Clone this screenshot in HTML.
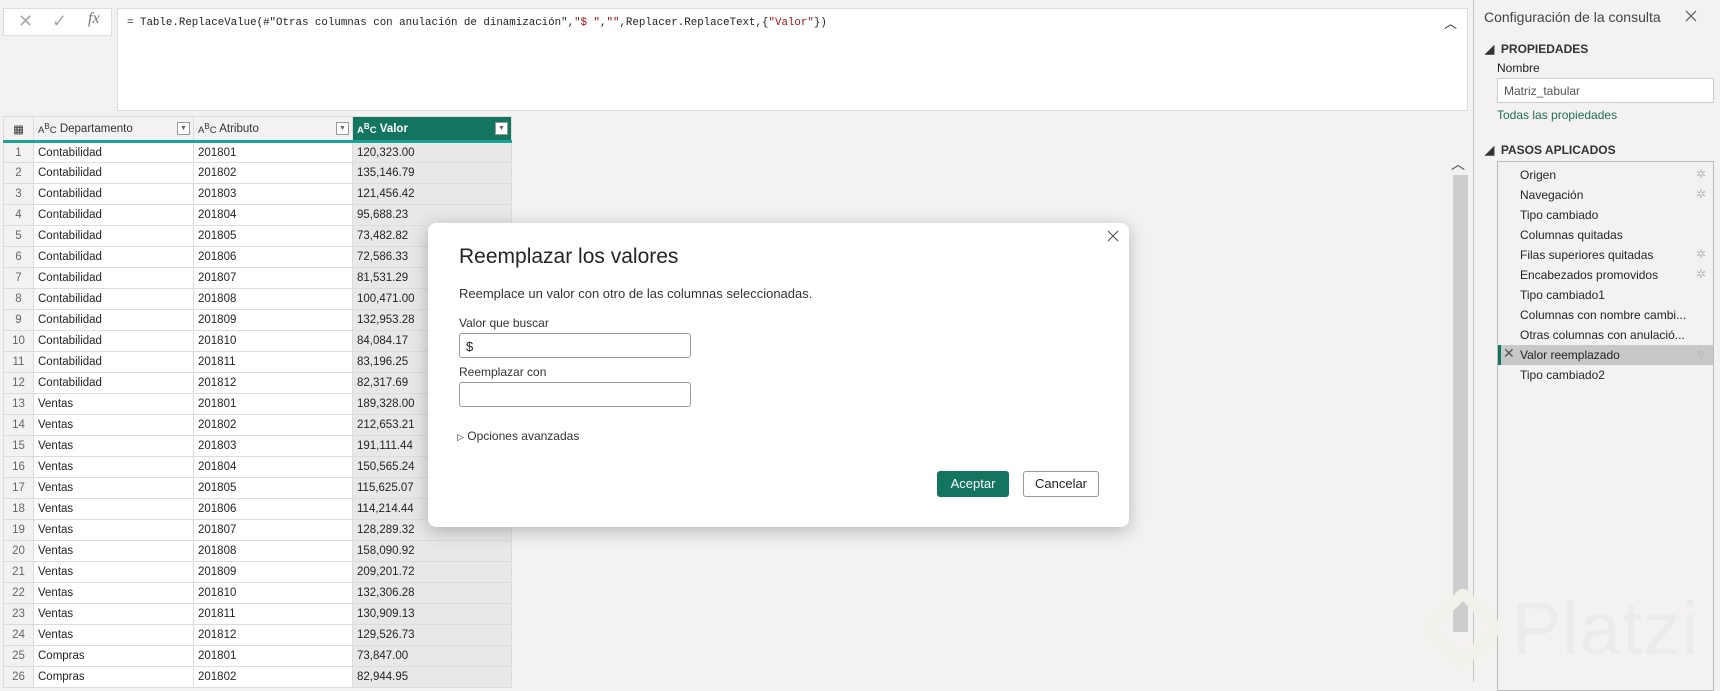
<!DOCTYPE html>
<html><head><meta charset="utf-8"><style>
*{box-sizing:border-box;margin:0;padding:0}
body{width:1720px;height:682px;background:#f3f2f1;position:relative;overflow:hidden;font-family:"Liberation Sans",sans-serif;color:#252423}
.abs{position:absolute}
table{border-collapse:collapse;position:absolute;left:3px;top:116px;font-size:11.5px}
td{height:21px;border:1px solid #dcdcdc;padding-left:4px;white-space:nowrap;background:#fff;position:relative}
td.n{width:30px;background:#f3f2f1;color:#666;text-align:center;padding:0}
td.a{width:160px}td.b{width:159px}td.c{width:159px;background:#e8e8e8}
.hd td{height:25px;background:#f3f2f1;border-bottom:3px solid #1ba397;font-size:11.5px;color:#333}
.hd td.c{background:#137560;color:#fff;font-weight:bold}
.dd{position:absolute;right:3px;top:5px;width:13px;height:13px;border:1px solid #999;background:#fff;font-size:7px;color:#666;text-align:center;line-height:12px;font-weight:normal}
.step{position:absolute;left:1520px;font-size:12px;color:#252423}
.gear{position:absolute;left:1696px;color:#bbb;font-size:12px}
</style></head><body>
<div class="abs" style="left:3px;top:8px;width:109px;height:28px;background:#fff;border:1px solid #ddd;color:#aaa;font-size:18px">
<span class="abs" style="left:14px;top:2px">✕</span><span class="abs" style="left:48px;top:2px">✓</span><span class="abs" style="left:84px;top:1px;font-family:'Liberation Serif',serif;font-style:italic;color:#777;font-size:16px">fx</span></div>
<div class="abs" style="left:117px;top:8px;width:1351px;height:103px;background:#fff;border:1px solid #ddd;font-family:'Liberation Mono',monospace;font-size:10.8px;padding:8px 9px;color:#222">= Table.ReplaceValue(#"Otras columnas con anulación de dinamización",<span style="color:#a31515">"$ "</span>,<span style="color:#a31515">""</span>,Replacer.ReplaceText,{<span style="color:#a31515">"Valor"</span>})<span class="abs" style="right:10px;top:4px;font-family:'Liberation Sans';font-size:13px">︿</span></div>
<table>
<tr class="hd"><td class="n">▦</td><td class="a"><small>A<sup>B</sup>C</small> Departamento<span class="dd">▼</span></td><td class="b"><small>A<sup>B</sup>C</small> Atributo<span class="dd">▼</span></td><td class="c"><small>A<sup>B</sup>C</small> Valor<span class="dd">▼</span></td></tr>
<tr><td class="n">1</td><td class="a">Contabilidad</td><td class="b">201801</td><td class="c">120,323.00</td></tr>
<tr><td class="n">2</td><td class="a">Contabilidad</td><td class="b">201802</td><td class="c">135,146.79</td></tr>
<tr><td class="n">3</td><td class="a">Contabilidad</td><td class="b">201803</td><td class="c">121,456.42</td></tr>
<tr><td class="n">4</td><td class="a">Contabilidad</td><td class="b">201804</td><td class="c">95,688.23</td></tr>
<tr><td class="n">5</td><td class="a">Contabilidad</td><td class="b">201805</td><td class="c">73,482.82</td></tr>
<tr><td class="n">6</td><td class="a">Contabilidad</td><td class="b">201806</td><td class="c">72,586.33</td></tr>
<tr><td class="n">7</td><td class="a">Contabilidad</td><td class="b">201807</td><td class="c">81,531.29</td></tr>
<tr><td class="n">8</td><td class="a">Contabilidad</td><td class="b">201808</td><td class="c">100,471.00</td></tr>
<tr><td class="n">9</td><td class="a">Contabilidad</td><td class="b">201809</td><td class="c">132,953.28</td></tr>
<tr><td class="n">10</td><td class="a">Contabilidad</td><td class="b">201810</td><td class="c">84,084.17</td></tr>
<tr><td class="n">11</td><td class="a">Contabilidad</td><td class="b">201811</td><td class="c">83,196.25</td></tr>
<tr><td class="n">12</td><td class="a">Contabilidad</td><td class="b">201812</td><td class="c">82,317.69</td></tr>
<tr><td class="n">13</td><td class="a">Ventas</td><td class="b">201801</td><td class="c">189,328.00</td></tr>
<tr><td class="n">14</td><td class="a">Ventas</td><td class="b">201802</td><td class="c">212,653.21</td></tr>
<tr><td class="n">15</td><td class="a">Ventas</td><td class="b">201803</td><td class="c">191,111.44</td></tr>
<tr><td class="n">16</td><td class="a">Ventas</td><td class="b">201804</td><td class="c">150,565.24</td></tr>
<tr><td class="n">17</td><td class="a">Ventas</td><td class="b">201805</td><td class="c">115,625.07</td></tr>
<tr><td class="n">18</td><td class="a">Ventas</td><td class="b">201806</td><td class="c">114,214.44</td></tr>
<tr><td class="n">19</td><td class="a">Ventas</td><td class="b">201807</td><td class="c">128,289.32</td></tr>
<tr><td class="n">20</td><td class="a">Ventas</td><td class="b">201808</td><td class="c">158,090.92</td></tr>
<tr><td class="n">21</td><td class="a">Ventas</td><td class="b">201809</td><td class="c">209,201.72</td></tr>
<tr><td class="n">22</td><td class="a">Ventas</td><td class="b">201810</td><td class="c">132,306.28</td></tr>
<tr><td class="n">23</td><td class="a">Ventas</td><td class="b">201811</td><td class="c">130,909.13</td></tr>
<tr><td class="n">24</td><td class="a">Ventas</td><td class="b">201812</td><td class="c">129,526.73</td></tr>
<tr><td class="n">25</td><td class="a">Compras</td><td class="b">201801</td><td class="c">73,847.00</td></tr>
<tr><td class="n">26</td><td class="a">Compras</td><td class="b">201802</td><td class="c">82,944.95</td></tr>
</table>
<div class="abs" style="left:1451px;top:154px;font-size:14px;color:#444">︿</div>
<div class="abs" style="left:1453px;top:175px;width:15px;height:457px;background:#cdcdcd"></div>
<div class="abs" style="left:1473px;top:0;width:1px;height:682px;background:#c8c8c8"></div>
<div class="abs" style="left:1484px;top:9px;font-size:14px;color:#444">Configuración de la consulta</div>
<svg class="abs" style="left:1685px;top:10px" width="12" height="12"><path d="M1 1L11 11M11 1L1 11" stroke="#555" stroke-width="1.2"/></svg>
<div class="abs" style="left:1485px;top:42px;font-size:12px;font-weight:bold;color:#333">◢&nbsp; PROPIEDADES</div>
<div class="abs" style="left:1497px;top:61px;font-size:12px">Nombre</div>
<div class="abs" style="left:1497px;top:78px;width:217px;height:25px;background:#fff;border:1px solid #ccc;font-size:12px;color:#555;padding:5px 6px">Matriz_tabular</div>
<div class="abs" style="left:1497px;top:108px;font-size:12px;color:#1e6e56">Todas las propiedades</div>
<div class="abs" style="left:1485px;top:143px;font-size:12px;font-weight:bold;color:#333">◢&nbsp; PASOS APLICADOS</div>
<div class="abs" style="left:1497px;top:161px;width:217px;height:530px;border:1px solid #bbb"></div>
<div class="abs" style="left:1498px;top:345px;width:215px;height:20px;background:#c8c8c8;border-left:3px solid #137560"></div>
<div class="abs" style="left:1503px;top:345px;font-size:14px;color:#555">✕</div>
<div class="step" style="top:168px">Origen</div><div class="gear" style="top:167px">✲</div>
<div class="step" style="top:188px">Navegación</div><div class="gear" style="top:187px">✲</div>
<div class="step" style="top:208px">Tipo cambiado</div>
<div class="step" style="top:228px">Columnas quitadas</div>
<div class="step" style="top:248px">Filas superiores quitadas</div><div class="gear" style="top:247px">✲</div>
<div class="step" style="top:268px">Encabezados promovidos</div><div class="gear" style="top:267px">✲</div>
<div class="step" style="top:288px">Tipo cambiado1</div>
<div class="step" style="top:308px">Columnas con nombre cambi...</div>
<div class="step" style="top:328px">Otras columnas con anulació...</div>
<div class="step" style="top:348px">Valor reemplazado</div><div class="gear" style="top:347px">✲</div>
<div class="step" style="top:368px">Tipo cambiado2</div>
<div class="abs" style="left:1433px;top:598px;width:60px;height:60px;border:11px solid #f0f2ea;transform:rotate(45deg);border-radius:8px"></div>
<div class="abs" style="left:1512px;top:586px;font-size:74px;color:#ebebe9;letter-spacing:1px">Platzi</div>
<div class="abs" style="left:428px;top:223px;width:701px;height:304px;background:#fff;border-radius:8px;box-shadow:0 4px 18px rgba(0,0,0,.25)">
<svg class="abs" style="left:679px;top:7px" width="12" height="12"><path d="M1 1L11 11M11 1L1 11" stroke="#555" stroke-width="1.1"/></svg>
<div class="abs" style="left:31px;top:22px;font-size:21px;color:#252423">Reemplazar los valores</div>
<div class="abs" style="left:31px;top:63px;font-size:13px;color:#333">Reemplace un valor con otro de las columnas seleccionadas.</div>
<div class="abs" style="left:31px;top:93px;font-size:12px;color:#333">Valor que buscar</div>
<div class="abs" style="left:31px;top:110px;width:232px;height:25px;border:1px solid #999;border-radius:3px;font-size:13px;padding:5px 6px">$</div>
<div class="abs" style="left:31px;top:142px;font-size:12px;color:#333">Reemplazar con</div>
<div class="abs" style="left:31px;top:159px;width:232px;height:25px;border:1px solid #999;border-radius:3px"></div>
<div class="abs" style="left:29px;top:206px;font-size:12px;color:#333"><span style="font-size:9px">▷</span> Opciones avanzadas</div>
<div class="abs" style="left:509px;top:248px;width:72px;height:26px;background:#137560;border-radius:3px;color:#fff;font-size:13px;text-align:center;line-height:26px">Aceptar</div>
<div class="abs" style="left:595px;top:248px;width:76px;height:26px;border:1px solid #999;border-radius:3px;font-size:13px;text-align:center;line-height:24px">Cancelar</div>
</div>
</body></html>
